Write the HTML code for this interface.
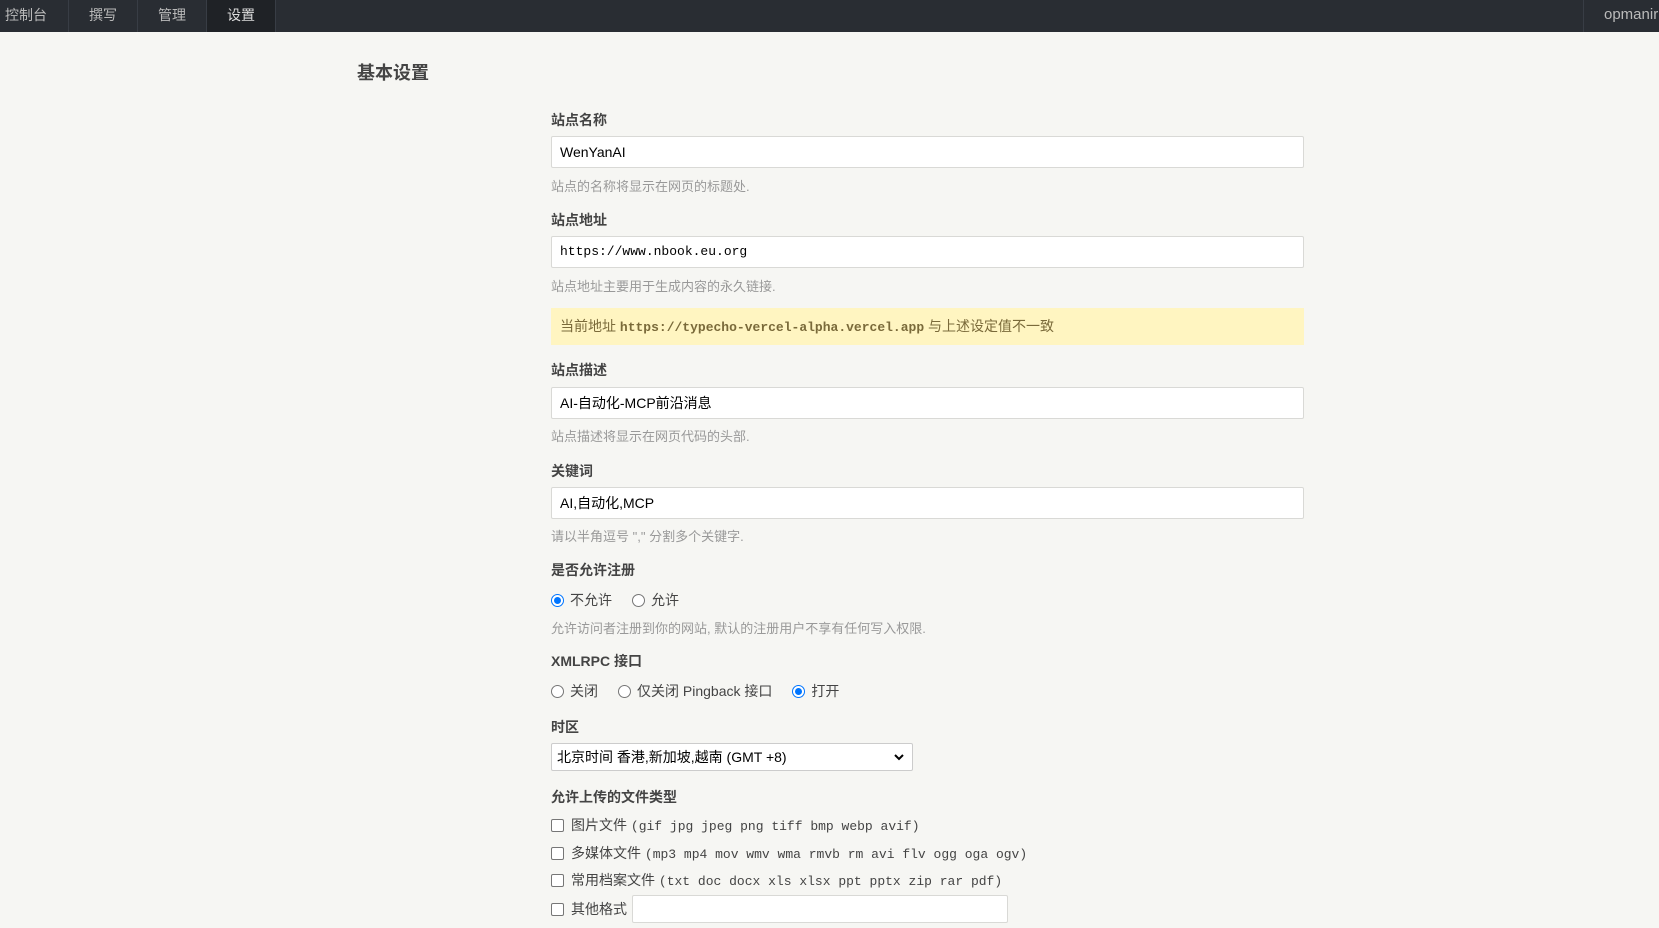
<!DOCTYPE html>
<html><head><meta charset="utf-8"><style>
*{box-sizing:border-box;margin:0;padding:0}
body{width:1659px;height:928px;overflow:hidden;background:#f6f6f3;font-family:"Liberation Sans","Noto Sans CJK SC",sans-serif;font-size:14px;color:#444;position:relative}
.nav{position:absolute;left:0;top:0;width:1659px;height:32px;background:#292d33}
.nav a{position:absolute;top:0;height:32px;line-height:30px;color:#bbb;font-size:14px;text-align:center;border-right:1px solid #383d45;width:69px}
.abs{position:absolute}
.lbl{position:absolute;left:551px;font-weight:bold;color:#444;font-size:14px}
.inp{position:absolute;left:551px;width:753px;height:32px;background:#fff;border:1px solid #d9d9d6;border-radius:2px;padding-left:8px;line-height:30px;color:#000;font-size:14px}
.help{position:absolute;left:551px;color:#999;font-size:13px}
.mono{font-family:"Liberation Mono","Noto Sans CJK SC",monospace}
.radio{display:inline-block;width:13px;height:13px;border:1px solid #767676;border-radius:50%;vertical-align:-2px;margin-right:6px;background:#fff;position:relative}
.radio.on{border:1px solid #0075ff}
.radio.on:after{content:"";position:absolute;left:2px;top:2px;width:7px;height:7px;border-radius:50%;background:#0075ff}
.cb{display:inline-block;width:13px;height:13px;border:1px solid #767676;border-radius:2px;vertical-align:-2px;margin-right:7px;background:#fff}
.row{position:absolute;left:551px;font-size:14px;color:#444;white-space:nowrap}
.gap{display:inline-block;width:20px}
</style></head><body>
<div class="nav">
<a style="left:0;text-align:left;padding-left:5px">控制台</a>
<a style="left:69px">撰写</a>
<a style="left:138px">管理</a>
<a style="left:207px;background:#1f2226;color:#ddd">设置</a>
<a style="left:1583px;width:80px;border-right:0;border-left:1px solid #383d45;text-align:left;padding-left:20px;font-size:15px">opmanir</a>
</div>
<div class="abs" style="left:357px;top:59px;font-size:18px;font-weight:bold;color:#444">基本设置</div>

<div class="lbl" style="top:110px">站点名称</div>
<div class="inp" style="top:136px">WenYanAI</div>
<div class="help" style="top:176px">站点的名称将显示在网页的标题处.</div>

<div class="lbl" style="top:210px">站点地址</div>
<div class="inp mono" style="top:236px;font-size:13px">https://www.nbook.eu.org</div>
<div class="help" style="top:276px">站点地址主要用于生成内容的永久链接.</div>

<div class="abs" style="left:551px;top:308px;width:753px;height:37px;background:#fff5c1;color:#7a6a3a;line-height:37px;padding-left:9px;font-size:14px">当前地址 <b class="mono" style="font-size:13px">https://typecho-vercel-alpha.vercel.app</b> 与上述设定值不一致</div>

<div class="lbl" style="top:360px">站点描述</div>
<div class="inp" style="top:387px">AI-自动化-MCP前沿消息</div>
<div class="help" style="top:426px">站点描述将显示在网页代码的头部.</div>

<div class="lbl" style="top:461px">关键词</div>
<div class="inp" style="top:487px">AI,自动化,MCP</div>
<div class="help" style="top:526px">请以半角逗号 "," 分割多个关键字.</div>

<div class="lbl" style="top:560px">是否允许注册</div>
<div class="row" style="top:590px"><span class="radio on"></span>不允许<span class="gap"></span><span class="radio"></span>允许</div>
<div class="help" style="top:618px">允许访问者注册到你的网站, 默认的注册用户不享有任何写入权限.</div>

<div class="lbl" style="top:651px">XMLRPC 接口</div>
<div class="row" style="top:681px"><span class="radio"></span>关闭<span class="gap"></span><span class="radio"></span>仅关闭 Pingback 接口<span class="gap"></span><span class="radio on"></span>打开</div>

<div class="lbl" style="top:717px">时区</div>
<div class="abs" style="left:551px;top:743px;width:362px;height:28px;background:#fff;border:1px solid #ccc;border-radius:2px;line-height:26px;padding-left:5px;color:#000;font-size:14px">北京时间 香港,新加坡,越南 (GMT +8)<svg style="position:absolute;right:8px;top:10px" width="10" height="7" viewBox="0 0 10 7"><path d="M1 1l4 4 4-4" stroke="#000" stroke-width="2" fill="none"/></svg></div>

<div class="lbl" style="top:787px">允许上传的文件类型</div>
<div class="row" style="top:815px"><span class="cb"></span>图片文件 <span class="mono" style="font-size:13px">(gif jpg jpeg png tiff bmp webp avif)</span></div>
<div class="row" style="top:843px"><span class="cb"></span>多媒体文件 <span class="mono" style="font-size:13px">(mp3 mp4 mov wmv wma rmvb rm avi flv ogg oga ogv)</span></div>
<div class="row" style="top:870px"><span class="cb"></span>常用档案文件 <span class="mono" style="font-size:13px">(txt doc docx xls xlsx ppt pptx zip rar pdf)</span></div>
<div class="row" style="top:899px"><span class="cb"></span>其他格式</div>
<div class="abs" style="left:632px;top:895px;width:376px;height:28px;background:#fff;border:1px solid #d9d9d6;border-radius:2px"></div>
</body></html>
